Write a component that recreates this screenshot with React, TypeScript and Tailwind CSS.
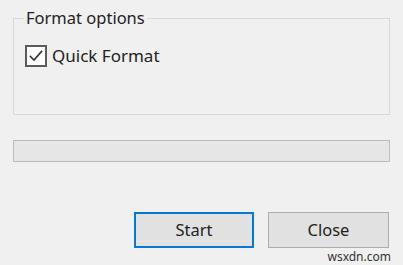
const CheckIcon = () => (
    <svg width="14" height="12" viewBox="0 0 14 12" fill="none">
        <path d="M1.5 6.5 L5 10 L12.5 1.5" stroke="#333" strokeWidth="1.6" strokeLinecap="square" />
    </svg>
)

export default function App() {
    return (
        <div
            className="w-[403px] h-[265px] bg-[#f0f0f0] overflow-hidden flex flex-col text-[#1a1a1a]"
            style={{ fontFamily: '"Noto Sans", "Open Sans", sans-serif' }}
        >
            <fieldset className="mx-[13px] mt-[7px] h-[109px] border border-[#d9d9d9] px-[11px] pt-[16px]">
                <legend className="ml-[-1px] px-[2px] text-[16.5px] leading-[22px] text-[#222]">Format options</legend>
                <label className="flex items-center gap-[5px]">
                    <span className="w-[22px] h-[22px] border-2 border-[#5a5a5a] bg-white flex items-center justify-center">
                        <CheckIcon />
                    </span>
                    <span className="text-[17px] leading-[22px] text-[#222]">Quick Format</span>
                </label>
            </fieldset>

            <div className="mx-[13px] mt-[25px] h-[22px] border border-[#bcbcbc] bg-[#e6e6e6]" />

            <div className="mt-[50px] flex justify-end gap-[14px] pr-[14px]">
                <button className="w-[120px] h-[36px] border-2 border-[#0078d7] bg-[#e1e1e1] text-[16.5px] text-[#222]">
                    Start
                </button>
                <button className="w-[121px] h-[36px] border border-[#adadad] bg-[#e1e1e1] text-[16.5px] text-[#222]">
                    Close
                </button>
            </div>
            <div className="flex justify-end pr-[12px] mt-[1px] text-[12px] leading-[16px] text-[#333]">wsxdn.com</div>
        </div>
    )
}
